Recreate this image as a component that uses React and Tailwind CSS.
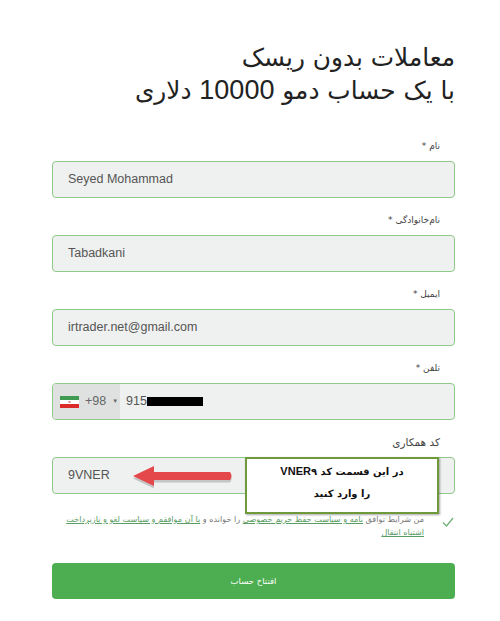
const fa = 'font-[DejaVu_Sans,sans-serif]';

function Label({ children, size = 'text-[9px]' }) {
  return (
    <div dir="rtl" className={`h-[37px] flex items-center pr-[15px] pt-[8px] ${size} text-[#444] ${fa}`}>
      {children}
    </div>
  );
}

function Field({ value }) {
  return (
    <div className="h-[37px] flex items-center pl-[15px] rounded-[4px] border border-[#8fcb88] bg-[#eff1f0] text-[12.5px] text-[#555]">
      {value}
    </div>
  );
}

function IranFlag() {
  return (
    <svg width="19" height="12" viewBox="0 0 19 12" className="shrink-0">
      <rect width="19" height="4" fill="#3f9b52" />
      <rect y="4" width="19" height="4" fill="#fff" />
      <rect y="8" width="19" height="4" fill="#da2a2a" />
      <rect x="8.5" y="5" width="2" height="2" fill="#d88" />
    </svg>
  );
}

export default function App() {
  return (
    <div className="w-[500px] h-[621px] overflow-hidden bg-white relative font-[Liberation_Sans,sans-serif]">
      <div className="pl-[52px] pr-[45px] pt-[41px]">
        <h1 dir="rtl" className={`text-[24.8px] leading-[33px] font-normal text-[#222] ${fa}`}>
          <div>معاملات بدون ریسک</div>
          <div>
            با یک حساب دمو <span className="font-[Liberation_Sans,sans-serif] text-[27px]">10000</span> دلاری
          </div>
        </h1>

        <div className="mt-[17px]">
          <Label>نام *</Label>
          <Field value="Seyed Mohammad" />
          <Label>نام‌خانوادگی *</Label>
          <Field value="Tabadkani" />
          <Label>ایمیل *</Label>
          <Field value="irtrader.net@gmail.com" />
          <Label>تلفن *</Label>
          <div className="h-[37px] flex items-center rounded-[4px] border border-[#8fcb88] bg-[#eff1f0] overflow-hidden text-[12.5px] text-[#555]">
            <div className="h-full w-[67px] pl-[7px] flex items-center gap-[6px] bg-[#dfe1e0] text-[#666]">
              <IranFlag />
              <span>+98</span>
              <span className="text-[6px]">▼</span>
            </div>
            <span className="ml-[6px]">915</span>
            <span className="w-[56px] h-[9px] bg-black" />
          </div>
          <Label size="text-[10.5px]">کد همکاری</Label>
          <Field value="9VNER" />
        </div>

        <div className="mt-[19px] flex items-start justify-between">
          <p dir="rtl" className={`w-[360px] ml-[12px] text-[8.1px] leading-[13px] text-[#777] ${fa}`}>
            من شرایط توافق <span className="underline text-[#5a9c63]">نامه و سیاست حفظ حریم خصوصی</span> را خوانده و{' '}
            <span className="underline text-[#5a9c63]">با آن موافقم و سیاست لغو و بازپرداخت اشتباه انتقال</span>
          </p>
          <svg width="14" height="12" viewBox="0 0 14 12" className="mt-[3px] shrink-0" fill="none" stroke="#6fae74" strokeWidth="1.2">
            <path d="M2 6.5 L5.5 10 L12 2" />
          </svg>
        </div>

        <button className={`mt-[24px] w-full h-[36px] rounded-[4px] bg-[#4cae50] text-white text-[8.5px] ${fa}`}>
          افتتاح حساب
        </button>
      </div>

      {/* annotation drawn over the form */}
      <svg width="102" height="24" viewBox="0 0 102 24" className="absolute left-[132px] top-[465px]">
        <path d="M1 12 L22 2 L22 8 L98 8 Q101 12 98 16 L22 16 L22 22 Z" fill="#000" fillOpacity="0.18" transform="translate(0 1.5)" />
        <path d="M1 11 L22 1 L22 7 L98 7 Q101 11 98 15 L22 15 L22 21 Z" fill="#e5484a" />
      </svg>
      <div dir="rtl" className={`absolute left-[245px] top-[457px] w-[194px] h-[57px] flex flex-col items-center justify-center gap-[7px] pb-[7px] border-[2px] border-[#6f9a3c] bg-white text-[10px] font-bold text-[#111] shadow-[1px_1px_2px_rgba(0,0,0,0.35)] ${fa}`}>
        <div>
          در این قسمت کد <span className="font-[Liberation_Sans,sans-serif] text-[11px]">VNER</span>۹
        </div>
        <div>را وارد کنید</div>
      </div>
    </div>
  );
}
